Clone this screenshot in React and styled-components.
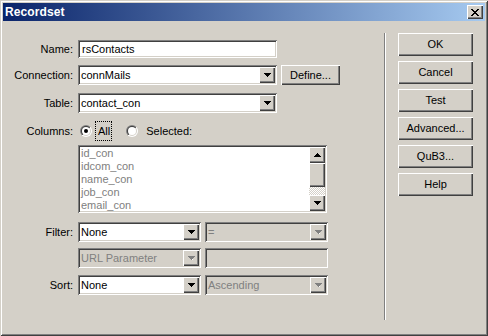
import React from "react";
import styled, { createGlobalStyle, css } from "styled-components";

const Global = createGlobalStyle`
  html, body { margin: 0; padding: 0; background: #d4d0c8; }
  body { font-family: "Liberation Sans", Arial, sans-serif; font-size: 11px; color: #000; }
`;

const raised = css`
  box-shadow: inset 1px 1px #fff, inset -1px -1px #404040, inset -2px -2px #808080;
`;
const sunken = css`
  box-shadow: inset 1px 1px #808080, inset -1px -1px #fff, inset 2px 2px #404040, inset -2px -2px #d4d0c8;
`;

const Window = styled.div`
  width: 488px;
  height: 336px;
  box-sizing: border-box;
  padding: 3px;
  background: #d4d0c8;
  box-shadow: inset 1px 1px #d4d0c8, inset -1px -1px #404040, inset 2px 2px #fff, inset -2px -2px #808080;
  display: flex;
  flex-direction: column;
`;

const TitleBar = styled.div`
  height: 18px;
  flex: none;
  display: flex;
  align-items: center;
  justify-content: space-between;
  padding: 0 2px 0 2px;
  background: linear-gradient(to right, #0a246a, #a6caf0);
`;

const Title = styled.span`
  color: #fff;
  font-weight: bold;
  font-size: 12px;
  letter-spacing: 0.1px;
`;

const CloseButton = styled.div`
  width: 16px;
  height: 14px;
  background: #d4d0c8;
  ${raised};
  display: flex;
  align-items: center;
  justify-content: center;
  svg { display: block; }
`;

const Body = styled.div`
  flex: 1;
  display: flex;
`;

const Form = styled.div`
  width: 381px;
  padding-top: 19px;
  display: grid;
  grid-template-columns: 70px 1fr;
  column-gap: 5px;
  align-content: start;
`;

const Label = styled.div`
  text-align: right;
  display: flex;
  align-items: center;
  justify-content: flex-end;
  margin-top: ${(p) => p.$mt || 0}px;
  height: ${(p) => p.$h || 20}px;
`;

const Control = styled.div`
  display: flex;
  align-items: center;
  gap: ${(p) => p.$gap || 4}px;
  margin-top: ${(p) => p.$mt || 0}px;
  height: ${(p) => p.$h || 20}px;
`;

const TextField = styled.div`
  box-sizing: border-box;
  width: ${(p) => p.$w}px;
  height: ${(p) => p.$h || 18}px;
  padding: 0 4px;
  display: flex;
  align-items: center;
  background: ${(p) => (p.$disabled ? "#d4d0c8" : "#fff")};
  color: ${(p) => (p.$disabled ? "#808080" : "#000")};
  ${sunken};
`;

const SelectBox = styled.div`
  box-sizing: border-box;
  width: ${(p) => p.$w}px;
  height: 20px;
  padding: 2px;
  display: flex;
  align-items: center;
  background: ${(p) => (p.$disabled ? "#d4d0c8" : "#fff")};
  color: ${(p) => (p.$disabled ? "#808080" : "#000")};
  ${sunken};
`;

const SelectText = styled.span`
  flex: 1;
  padding-left: 1px;
  white-space: nowrap;
  overflow: hidden;
`;

const ArrowButton = styled.div`
  width: 16px;
  height: 16px;
  flex: none;
  background: #d4d0c8;
  ${raised};
  display: flex;
  align-items: center;
  justify-content: center;
  svg { display: block; }
`;

const Button = styled.div`
  box-sizing: border-box;
  width: ${(p) => p.$w || 75}px;
  height: ${(p) => p.$h || 23}px;
  background: #d4d0c8;
  ${raised};
  display: flex;
  align-items: center;
  justify-content: center;
  font-size: 11px;
  padding-bottom: 1px;
`;

const Separator = styled.div`
  width: 0;
  margin: 12px 0 13px 0;
  border-left: 1px solid #808080;
  border-right: 1px solid #fff;
`;

const ButtonColumn = styled.div`
  margin-left: 12px;
  padding-top: 12px;
  display: flex;
  flex-direction: column;
  gap: 5px;
`;

const RadioGroup = styled.div`
  display: flex;
  align-items: center;
  margin-left: 2px;
`;

const RadioOuter = styled.span`
  width: 12px;
  height: 12px;
  border-radius: 50%;
  background: linear-gradient(135deg, #808080 50%, #fff 50%);
  display: flex;
  align-items: center;
  justify-content: center;
  flex: none;
`;
const RadioMid = styled.span`
  width: 10px;
  height: 10px;
  border-radius: 50%;
  background: linear-gradient(135deg, #404040 50%, #d4d0c8 50%);
  display: flex;
  align-items: center;
  justify-content: center;
`;
const RadioInner = styled.span`
  width: 8px;
  height: 8px;
  border-radius: 50%;
  background: #fff;
  display: flex;
  align-items: center;
  justify-content: center;
  &::after {
    content: "";
    display: ${(p) => (p.$checked ? "block" : "none")};
    width: 4px;
    height: 4px;
    border-radius: 50%;
    background: #000;
  }
`;

const RadioLabel = styled.span`
  margin-left: ${(p) => p.$ml || 4}px;
  padding: 3px 1px 3px 2px;
  border: 1px dotted ${(p) => (p.$focus ? "#000" : "transparent")};
  margin-right: ${(p) => p.$mr || 0}px;
`;

const ListBox = styled.div`
  box-sizing: border-box;
  width: 249px;
  height: 68px;
  padding: 2px;
  background: #fff;
  ${sunken};
  display: flex;
`;

const ListItems = styled.div`
  flex: 1;
  color: #808080;
  padding-left: 1px;
  line-height: 13px;
`;

const ScrollBar = styled.div`
  width: 16px;
  display: flex;
  flex-direction: column;
`;

const Thumb = styled.div`
  height: 24px;
  background: #d4d0c8;
  ${raised};
`;

const Track = styled.div`
  flex: 1;
  background: repeating-conic-gradient(#d4d0c8 0 25%, #fff 0 50%) 0 0 / 2px 2px;
`;

const DownArrow = ({ disabled }) => (
  <svg width="7" height="4" viewBox="0 0 7 4">
    <path d="M0 0h7L3.5 4z" fill={disabled ? "#808080" : "#000"} shapeRendering="crispEdges" />
    {disabled && <rect x="4" y="3" width="1" height="1" fill="#fff" />}
  </svg>
);

const UpArrow = () => (
  <svg width="7" height="4" viewBox="0 0 7 4">
    <path d="M0 4h7L3.5 0z" fill="#000" shapeRendering="crispEdges" />
  </svg>
);

const Select = ({ w, value, disabled }) => (
  <SelectBox $w={w} $disabled={disabled}>
    <SelectText>{value}</SelectText>
    <ArrowButton>
      <DownArrow disabled={disabled} />
    </ArrowButton>
  </SelectBox>
);

const Radio = ({ checked }) => (
  <RadioOuter>
    <RadioMid>
      <RadioInner $checked={checked} />
    </RadioMid>
  </RadioOuter>
);

export default function App() {
  return (
    <>
      <Global />
      <Window>
        <TitleBar>
          <Title>Recordset</Title>
          <CloseButton>
            <svg width="8" height="7" viewBox="0 0 8 7" shapeRendering="crispEdges">
              <path
                d="M0 0h2v1h1v1h2v-1h1v-1h2v1h-1v1h-1v1h-1v1h1v1h1v1h1v1h-2v-1h-1v-1h-2v1h-1v1h-2v-1h1v-1h1v-1h1v-1h-1v-1h-1v-1h-1z"
                fill="#000"
              />
            </svg>
          </CloseButton>
        </TitleBar>
        <Body>
          <Form>
            <Label $h={18}>Name:</Label>
            <Control $h={18}>
              <TextField $w={199}>rsContacts</TextField>
            </Control>

            <Label $mt={7}>Connection:</Label>
            <Control $mt={7}>
              <Select w={199} value="connMails" />
              <Button $w={59} $h={20}>Define...</Button>
            </Control>

            <Label $mt={8}>Table:</Label>
            <Control $mt={8}>
              <Select w={199} value="contact_con" />
            </Control>

            <Label $mt={8}>Columns:</Label>
            <Control $mt={8}>
              <RadioGroup>
                <Radio checked />
                <RadioLabel $ml={3} $mr={14} $focus>All</RadioLabel>
                <Radio />
                <RadioLabel $ml={5}>Selected:</RadioLabel>
              </RadioGroup>
            </Control>

            <div />
            <Control $mt={4} $h={68}>
              <ListBox>
                <ListItems>
                  <div>id_con</div>
                  <div>idcom_con</div>
                  <div>name_con</div>
                  <div>job_con</div>
                  <div>email_con</div>
                </ListItems>
                <ScrollBar>
                  <ArrowButton>
                    <UpArrow />
                  </ArrowButton>
                  <Thumb />
                  <Track />
                  <ArrowButton>
                    <DownArrow />
                  </ArrowButton>
                </ScrollBar>
              </ListBox>
            </Control>

            <Label $mt={9}>Filter:</Label>
            <Control $mt={9}>
              <Select w={123} value="None" />
              <Select w={123} value="=" disabled />
            </Control>

            <div />
            <Control $mt={6}>
              <Select w={123} value="URL Parameter" disabled />
              <TextField $w={123} $h={20} $disabled />
            </Control>

            <Label $mt={7}>Sort:</Label>
            <Control $mt={7}>
              <Select w={123} value="None" />
              <Select w={123} value="Ascending" disabled />
            </Control>
          </Form>
          <Separator />
          <ButtonColumn>
            <Button>OK</Button>
            <Button>Cancel</Button>
            <Button>Test</Button>
            <Button>Advanced...</Button>
            <Button>QuB3...</Button>
            <Button>Help</Button>
          </ButtonColumn>
        </Body>
      </Window>
    </>
  );
}
